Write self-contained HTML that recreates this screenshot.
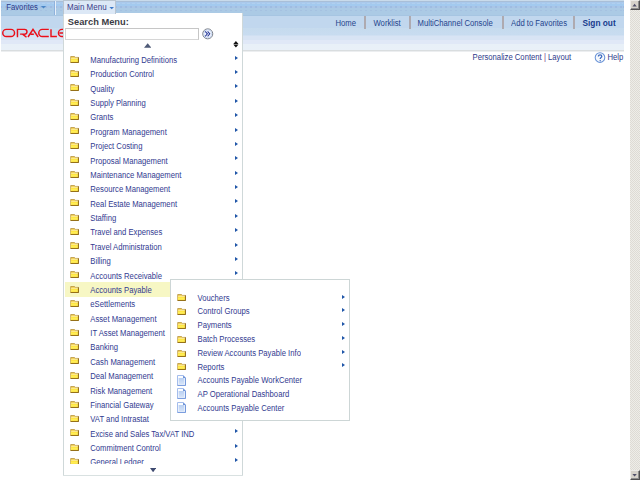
<!DOCTYPE html>
<html><head><meta charset="utf-8">
<style>
*{margin:0;padding:0;box-sizing:border-box}
html,body{width:640px;height:480px;overflow:hidden;background:#fff}
body{position:relative;font-family:"Liberation Sans",sans-serif;font-size:7.7px;color:#323a90}
.t{position:absolute;white-space:nowrap;line-height:10px}
.a{position:absolute}
#hdr{position:absolute;left:1px;top:0;width:623px;height:52px;background:linear-gradient(to bottom,
 #c9dbeb 0px,#c9dbeb 1px,#a9bfd8 1px,#a9bfd8 2px,#a9c9ec 2px,#a9c9ec 4px,#a3caef 4px,#a3caef 6px,#a9c6e6 6px,#a9c6e6 8px,#abcae5 8px,#abcae5 15px,
 #a6c5e2 15px,#a6c5e2 16px,#c1d7ee 16px,#c1d7ee 28px,#c6dbee 28px,#c8dcf0 35px,#d8e4f4 36px,#d8e4f4 40px,#e0e8f7 40px,#e0e8f7 44px,#e8f0f8 44px,#e9f0f8 50px,
 #d9dddf 50px,#d9dddf 51px,#eceef0 51px,#eceef0 52px)}
.sep{position:absolute;width:1px;background:#9ea6ae}
.sbb{position:absolute;left:630px;width:10px;height:10px;background:#d6d2ca;border-top:1px solid #ecebe6;border-left:1px solid #ecebe6;border-right:1px solid #505050;border-bottom:1px solid #505050;box-shadow:inset -1px -1px #8c8c8c}
.fd{position:absolute;width:9px;height:7px}
.dc{position:absolute;width:9px;height:11px}
.ar{position:absolute;width:0;height:0;border-top:2.5px solid transparent;border-bottom:2.5px solid transparent;border-left:3px solid #1f55a8}
</style></head><body>
<div id="hdr"></div>
<div class="a" style="left:1px;top:3px;width:623px;height:1px;background:repeating-linear-gradient(to right,transparent 0,transparent 2px,#b0d0ef 2px,#b0d0ef 5px);background-position:-1px 0"></div>
<div class="a" style="left:1px;top:6px;width:623px;height:2px;background:repeating-linear-gradient(to right,#9fbce2 0,#9fbce2 2px,transparent 2px,transparent 5px);background-position:-1px 0"></div>
<div class="a" style="left:1px;top:10px;width:623px;height:1px;background:repeating-linear-gradient(to right,#a5c1e1 0,#a5c1e1 2px,transparent 2px,transparent 5px);background-position:-1px 0"></div>
<div class="t" style="left:6.30px;top:2.50px;font-size:7.7px;transform:scaleY(1.15);transform-origin:0 7.50px;color:#2e3a8a;">Favorites</div>
<svg class="a" style="left:40px;top:5px" width="8" height="5" viewBox="40 5 8 5"><path d="M40.9 5.9 H46.1 L43.5 8.5 Z" fill="#4a86c6"/></svg>
<div class="sep" style="left:54px;top:1px;height:14px;background:#8fb2dc"></div>
<div class="sep" style="left:55px;top:1px;height:14px;background:#e8f0fa"></div>
<svg class="a" style="left:0;top:26px" width="64" height="14" viewBox="0 26 64 14">
 <g fill="none" stroke="#ea0f1a" stroke-width="1.45">
  <path d="M6.3 29.35 H11.0 A3.55 3.55 0 0 1 11.0 36.45 H6.3 A3.55 3.55 0 0 1 6.3 29.35 Z"/>
  <path d="M17.45 37.3 V29.35 H24.6 A2.375 2.375 0 0 1 24.6 34.1 H20.1 M22.6 34.1 L26.5 37.3"/>
  <path d="M28.0 37.0 L33.0 29.35 L38.1 37.0 M30.7 34.3 H33.8"/>
  <path d="M48.8 29.35 H42.3 A3.55 3.55 0 0 0 42.3 36.45 H48.8"/>
  <path d="M51.0 29.2 V36.45 H56.9"/>
  <path d="M63.5 29.35 H62.0 A3.55 3.55 0 0 0 62.0 36.45 H63.5 M59.5 33.0 H63.5"/>
 </g>
</svg>
<div class="t" style="left:335.50px;top:19.10px;font-size:7.7px;transform:scaleY(1.15);transform-origin:0 7.50px;color:#24448c;">Home</div>
<div class="sep" style="left:364px;top:16px;height:12.5px;width:2px;background:#aeaab0"></div>
<div class="t" style="left:373.50px;top:19.10px;font-size:7.7px;transform:scaleY(1.15);transform-origin:0 7.50px;color:#24448c;">Worklist</div>
<div class="sep" style="left:409px;top:16px;height:12.5px;width:2px;background:#aeaab0"></div>
<div class="t" style="left:417.50px;top:19.10px;font-size:7.7px;transform:scaleY(1.15);transform-origin:0 7.50px;color:#24448c;">MultiChannel Console</div>
<div class="sep" style="left:502px;top:16px;height:12.5px;width:2px;background:#aeaab0"></div>
<div class="t" style="left:511.00px;top:19.10px;font-size:7.7px;transform:scaleY(1.15);transform-origin:0 7.50px;color:#24448c;">Add to Favorites</div>
<div class="sep" style="left:573px;top:16px;height:12.5px;width:2px;background:#aeaab0"></div>
<div class="t" style="left:582.50px;top:18.30px;font-size:8.3px;transform:scaleY(1.05);transform-origin:0 8.00px;color:#173b8c;font-weight:bold;">Sign out</div>
<div class="t" style="left:472.50px;top:53.10px;font-size:7.7px;transform:scaleY(1.15);transform-origin:0 7.50px;color:#2e3a8a;">Personalize Content <span style="color:#6e3a84">|</span> Layout</div>
<svg class="a" style="left:594px;top:52px" width="12" height="12" viewBox="0 0 12 12">
 <circle cx="6" cy="5.6" r="4.8" fill="#f6f9fd" stroke="#6a94d8" stroke-width="1.05"/>
 <path d="M4.4 4.6 C4.4 3.5 5.1 2.9 6.1 2.9 C7.1 2.9 7.8 3.5 7.8 4.4 C7.8 5.5 6.2 5.7 6.2 7.0" fill="none" stroke="#3f6cc0" stroke-width="1.3"/><circle cx="6.2" cy="8.7" r="0.75" fill="#3f6cc0"/>
</svg>
<div class="t" style="left:607.50px;top:53.10px;font-size:7.7px;transform:scaleY(1.15);transform-origin:0 7.50px;color:#2e3a8a;">Help</div>
<div class="a" style="left:630px;top:0;width:10px;height:480px;background-color:#dedbd4;background-image:linear-gradient(45deg,#eeede8 25%,transparent 25%,transparent 75%,#eeede8 75%),linear-gradient(45deg,#eeede8 25%,transparent 25%,transparent 75%,#eeede8 75%);background-size:2px 2px;background-position:0 0,1px 1px"></div>
<div class="sbb" style="top:0"></div>
<svg class="a" style="left:631px;top:1px" width="8" height="8" viewBox="0 0 8 8"><path d="M1.4 5.4 L3.6 2.8 L5.8 5.4 Z" fill="#505068"/></svg>
<div class="sbb" style="top:470px"></div>
<svg class="a" style="left:631px;top:471px" width="8" height="8" viewBox="0 0 8 8"><path d="M1.4 3.0 L3.6 5.6 L5.8 3.0 Z" fill="#505068"/></svg>
<div class="a" style="left:63px;top:13px;width:180px;height:462px;background:#fff;border:1px solid #cfd8d9;border-width:0 1px 0 1px"></div>
<div class="a" style="left:63px;top:474.8px;width:180px;height:1.5px;background:#d9e1e1"></div>
<div class="a" style="left:63px;top:0;width:53px;height:14px;background:#dce8f6;border:1px solid #b8c4d0;border-bottom:none"></div>
<div class="t" style="left:67.00px;top:3.30px;font-size:8.0px;transform:scaleY(1.2);transform-origin:0 7.50px;color:#3a3c88;">Main Menu</div>
<svg class="a" style="left:108px;top:6px" width="8" height="5" viewBox="108 6 8 5"><path d="M109.4 7.0 H114.0 L111.7 9.3 Z" fill="#3a78c8"/></svg>
<div class="t" style="left:67.80px;top:16.90px;font-size:9.3px;transform:scaleY(1.05);transform-origin:0 8.00px;color:#3c3c44;font-weight:bold;">Search Menu:</div>
<div class="a" style="left:65px;top:28px;width:134px;height:11.5px;background:#fff;border:1px solid #c6c6c6;border-left-color:#d6d6d6;border-bottom:1.5px solid #d6d6d6"></div>
<svg class="a" style="left:201.5px;top:28px" width="12" height="12" viewBox="0 0 12 12">
 <circle cx="5.75" cy="5.85" r="5.0" fill="#f6f9fd" stroke="#6c727c" stroke-width="0.9"/>
 <circle cx="5.75" cy="5.85" r="4.0" fill="none" stroke="#bccff0" stroke-width="0.8"/>
 <path d="M3.2 3.3 L5.4 5.85 L3.2 8.4 M5.6 3.3 L7.8 5.85 L5.6 8.4" fill="none" stroke="#2b3c9c" stroke-width="1.05"/>
</svg>
<svg class="a" style="left:233px;top:40.5px" width="6" height="7" viewBox="0 0 6 7"><path d="M0.3 2.9 L2.9 0 L5.5 2.9 Z M0.3 3.6 L2.9 6.5 L5.5 3.6 Z" fill="#111"/></svg>
<svg class="a" style="left:143.8px;top:43.3px" width="7.5" height="5" viewBox="0 0 7.5 5"><path d="M0 4.8 L3.7 0.3 L7.4 4.8 Z" fill="#4f5b78"/></svg>
<svg class="a" style="left:150px;top:467.8px" width="6.2" height="4.4" viewBox="0 0 6.2 4.4"><path d="M0 0 L6.2 0 L3.1 4.3 Z" fill="#3e4a70"/></svg>
<svg width="0" height="0" style="position:absolute">
 <defs>
  <linearGradient id="fg" x1="0" y1="0" x2="0" y2="1"><stop offset="0" stop-color="#ffe030"/><stop offset="0.6" stop-color="#fff060"/><stop offset="1" stop-color="#f8d830"/></linearGradient>
  <linearGradient id="dg" x1="0" y1="0" x2="0" y2="1"><stop offset="0" stop-color="#b8cff2"/><stop offset="1" stop-color="#d6e4f8"/></linearGradient>
  <symbol id="fold" viewBox="0 0 9 7"><path d="M0.7 6.6 V0.5 H4.5 L5.1 1.4 H8.4 V6.6 Z" fill="#f0c838" stroke="#b08a38" stroke-width="0.7"/><rect x="1.1" y="1.8" width="7" height="0.9" fill="#fffce8"/><rect x="0.9" y="2.7" width="7.3" height="3.7" fill="url(#fg)"/><path d="M8.4 1.4 V6.6 H0.7" fill="none" stroke="#86600e" stroke-width="0.9"/></symbol>
  <symbol id="doc" viewBox="0 0 9 11"><path d="M0.5 0.5 H6.2 L8.5 2.8 V10.4 H0.5 Z" fill="#fbfdff" stroke="#9ab6ea" stroke-width="0.9"/><path d="M8.5 2.8 V10.4 H0.5" fill="none" stroke="#6f95da" stroke-width="0.9"/><path d="M6.1 0.4 V2.9 H8.6 Z" fill="#5f88d4"/><rect x="1.6" y="3.0" width="5.8" height="6.2" fill="url(#dg)"/></symbol>
 </defs>
</svg>
<div class="a" style="left:64px;top:50px;width:178px;height:414.2px;overflow:hidden">
<div class="t" style="left:26.30px;top:5.90px;font-size:7.7px;transform:scaleY(1.15);transform-origin:0 7.50px;">Manufacturing Definitions</div>
<svg class="fd" style="left:6.400000000000006px;top:5.60px" viewBox="0 0 9 7"><use href="#fold"/></svg>
<div class="ar" style="left:171px;top:5.70px"></div>
<div class="t" style="left:26.30px;top:20.28px;font-size:7.7px;transform:scaleY(1.15);transform-origin:0 7.50px;">Production Control</div>
<svg class="fd" style="left:6.400000000000006px;top:19.98px" viewBox="0 0 9 7"><use href="#fold"/></svg>
<div class="ar" style="left:171px;top:20.08px"></div>
<div class="t" style="left:26.30px;top:34.65px;font-size:7.7px;transform:scaleY(1.15);transform-origin:0 7.50px;">Quality</div>
<svg class="fd" style="left:6.400000000000006px;top:34.35px" viewBox="0 0 9 7"><use href="#fold"/></svg>
<div class="ar" style="left:171px;top:34.45px"></div>
<div class="t" style="left:26.30px;top:49.03px;font-size:7.7px;transform:scaleY(1.15);transform-origin:0 7.50px;">Supply Planning</div>
<svg class="fd" style="left:6.400000000000006px;top:48.73px" viewBox="0 0 9 7"><use href="#fold"/></svg>
<div class="ar" style="left:171px;top:48.83px"></div>
<div class="t" style="left:26.30px;top:63.40px;font-size:7.7px;transform:scaleY(1.15);transform-origin:0 7.50px;">Grants</div>
<svg class="fd" style="left:6.400000000000006px;top:63.10px" viewBox="0 0 9 7"><use href="#fold"/></svg>
<div class="ar" style="left:171px;top:63.20px"></div>
<div class="t" style="left:26.30px;top:77.77px;font-size:7.7px;transform:scaleY(1.15);transform-origin:0 7.50px;">Program Management</div>
<svg class="fd" style="left:6.400000000000006px;top:77.47px" viewBox="0 0 9 7"><use href="#fold"/></svg>
<div class="ar" style="left:171px;top:77.57px"></div>
<div class="t" style="left:26.30px;top:92.15px;font-size:7.7px;transform:scaleY(1.15);transform-origin:0 7.50px;">Project Costing</div>
<svg class="fd" style="left:6.400000000000006px;top:91.85px" viewBox="0 0 9 7"><use href="#fold"/></svg>
<div class="ar" style="left:171px;top:91.95px"></div>
<div class="t" style="left:26.30px;top:106.52px;font-size:7.7px;transform:scaleY(1.15);transform-origin:0 7.50px;">Proposal Management</div>
<svg class="fd" style="left:6.400000000000006px;top:106.22px" viewBox="0 0 9 7"><use href="#fold"/></svg>
<div class="ar" style="left:171px;top:106.32px"></div>
<div class="t" style="left:26.30px;top:120.90px;font-size:7.7px;transform:scaleY(1.15);transform-origin:0 7.50px;">Maintenance Management</div>
<svg class="fd" style="left:6.400000000000006px;top:120.60px" viewBox="0 0 9 7"><use href="#fold"/></svg>
<div class="ar" style="left:171px;top:120.70px"></div>
<div class="t" style="left:26.30px;top:135.27px;font-size:7.7px;transform:scaleY(1.15);transform-origin:0 7.50px;">Resource Management</div>
<svg class="fd" style="left:6.400000000000006px;top:134.97px" viewBox="0 0 9 7"><use href="#fold"/></svg>
<div class="ar" style="left:171px;top:135.07px"></div>
<div class="t" style="left:26.30px;top:149.65px;font-size:7.7px;transform:scaleY(1.15);transform-origin:0 7.50px;">Real Estate Management</div>
<svg class="fd" style="left:6.400000000000006px;top:149.35px" viewBox="0 0 9 7"><use href="#fold"/></svg>
<div class="ar" style="left:171px;top:149.45px"></div>
<div class="t" style="left:26.30px;top:164.02px;font-size:7.7px;transform:scaleY(1.15);transform-origin:0 7.50px;">Staffing</div>
<svg class="fd" style="left:6.400000000000006px;top:163.72px" viewBox="0 0 9 7"><use href="#fold"/></svg>
<div class="ar" style="left:171px;top:163.82px"></div>
<div class="t" style="left:26.30px;top:178.40px;font-size:7.7px;transform:scaleY(1.15);transform-origin:0 7.50px;">Travel and Expenses</div>
<svg class="fd" style="left:6.400000000000006px;top:178.10px" viewBox="0 0 9 7"><use href="#fold"/></svg>
<div class="ar" style="left:171px;top:178.20px"></div>
<div class="t" style="left:26.30px;top:192.77px;font-size:7.7px;transform:scaleY(1.15);transform-origin:0 7.50px;">Travel Administration</div>
<svg class="fd" style="left:6.400000000000006px;top:192.47px" viewBox="0 0 9 7"><use href="#fold"/></svg>
<div class="ar" style="left:171px;top:192.57px"></div>
<div class="t" style="left:26.30px;top:207.15px;font-size:7.7px;transform:scaleY(1.15);transform-origin:0 7.50px;">Billing</div>
<svg class="fd" style="left:6.400000000000006px;top:206.85px" viewBox="0 0 9 7"><use href="#fold"/></svg>
<div class="ar" style="left:171px;top:206.95px"></div>
<div class="t" style="left:26.30px;top:221.52px;font-size:7.7px;transform:scaleY(1.15);transform-origin:0 7.50px;">Accounts Receivable</div>
<svg class="fd" style="left:6.400000000000006px;top:221.22px" viewBox="0 0 9 7"><use href="#fold"/></svg>
<div class="ar" style="left:171px;top:221.32px"></div>
<div class="a" style="left:1px;top:232.25px;width:178px;height:14.4px;background:#f7f7c4"></div>
<div class="t" style="left:26.30px;top:235.90px;font-size:7.7px;transform:scaleY(1.15);transform-origin:0 7.50px;">Accounts Payable</div>
<svg class="fd" style="left:6.400000000000006px;top:235.60px" viewBox="0 0 9 7"><use href="#fold"/></svg>
<div class="ar" style="left:171px;top:235.70px"></div>
<div class="t" style="left:26.30px;top:250.27px;font-size:7.7px;transform:scaleY(1.15);transform-origin:0 7.50px;">eSettlements</div>
<svg class="fd" style="left:6.400000000000006px;top:249.97px" viewBox="0 0 9 7"><use href="#fold"/></svg>
<div class="ar" style="left:171px;top:250.07px"></div>
<div class="t" style="left:26.30px;top:264.65px;font-size:7.7px;transform:scaleY(1.15);transform-origin:0 7.50px;">Asset Management</div>
<svg class="fd" style="left:6.400000000000006px;top:264.35px" viewBox="0 0 9 7"><use href="#fold"/></svg>
<div class="ar" style="left:171px;top:264.45px"></div>
<div class="t" style="left:26.30px;top:279.02px;font-size:7.7px;transform:scaleY(1.15);transform-origin:0 7.50px;">IT Asset Management</div>
<svg class="fd" style="left:6.400000000000006px;top:278.72px" viewBox="0 0 9 7"><use href="#fold"/></svg>
<div class="ar" style="left:171px;top:278.82px"></div>
<div class="t" style="left:26.30px;top:293.40px;font-size:7.7px;transform:scaleY(1.15);transform-origin:0 7.50px;">Banking</div>
<svg class="fd" style="left:6.400000000000006px;top:293.10px" viewBox="0 0 9 7"><use href="#fold"/></svg>
<div class="ar" style="left:171px;top:293.20px"></div>
<div class="t" style="left:26.30px;top:307.77px;font-size:7.7px;transform:scaleY(1.15);transform-origin:0 7.50px;">Cash Management</div>
<svg class="fd" style="left:6.400000000000006px;top:307.47px" viewBox="0 0 9 7"><use href="#fold"/></svg>
<div class="ar" style="left:171px;top:307.57px"></div>
<div class="t" style="left:26.30px;top:322.15px;font-size:7.7px;transform:scaleY(1.15);transform-origin:0 7.50px;">Deal Management</div>
<svg class="fd" style="left:6.400000000000006px;top:321.85px" viewBox="0 0 9 7"><use href="#fold"/></svg>
<div class="ar" style="left:171px;top:321.95px"></div>
<div class="t" style="left:26.30px;top:336.52px;font-size:7.7px;transform:scaleY(1.15);transform-origin:0 7.50px;">Risk Management</div>
<svg class="fd" style="left:6.400000000000006px;top:336.22px" viewBox="0 0 9 7"><use href="#fold"/></svg>
<div class="ar" style="left:171px;top:336.32px"></div>
<div class="t" style="left:26.30px;top:350.90px;font-size:7.7px;transform:scaleY(1.15);transform-origin:0 7.50px;">Financial Gateway</div>
<svg class="fd" style="left:6.400000000000006px;top:350.60px" viewBox="0 0 9 7"><use href="#fold"/></svg>
<div class="ar" style="left:171px;top:350.70px"></div>
<div class="t" style="left:26.30px;top:365.27px;font-size:7.7px;transform:scaleY(1.15);transform-origin:0 7.50px;">VAT and Intrastat</div>
<svg class="fd" style="left:6.400000000000006px;top:364.97px" viewBox="0 0 9 7"><use href="#fold"/></svg>
<div class="ar" style="left:171px;top:365.07px"></div>
<div class="t" style="left:26.30px;top:379.65px;font-size:7.7px;transform:scaleY(1.15);transform-origin:0 7.50px;">Excise and Sales Tax/VAT IND</div>
<svg class="fd" style="left:6.400000000000006px;top:379.35px" viewBox="0 0 9 7"><use href="#fold"/></svg>
<div class="ar" style="left:171px;top:379.45px"></div>
<div class="t" style="left:26.30px;top:394.02px;font-size:7.7px;transform:scaleY(1.15);transform-origin:0 7.50px;">Commitment Control</div>
<svg class="fd" style="left:6.400000000000006px;top:393.72px" viewBox="0 0 9 7"><use href="#fold"/></svg>
<div class="ar" style="left:171px;top:393.82px"></div>
<div class="t" style="left:26.30px;top:408.40px;font-size:7.7px;transform:scaleY(1.15);transform-origin:0 7.50px;">General Ledger</div>
<svg class="fd" style="left:6.400000000000006px;top:408.10px" viewBox="0 0 9 7"><use href="#fold"/></svg>
<div class="ar" style="left:171px;top:408.20px"></div>
</div>
<div class="a" style="left:170px;top:279px;width:180px;height:142px;background:#fff;border:1px solid #cdd6d6"></div>
<div class="t" style="left:197.50px;top:293.70px;font-size:7.7px;transform:scaleY(1.15);transform-origin:0 7.50px;">Vouchers</div>
<svg class="fd" style="left:177px;top:294.40px" viewBox="0 0 9 7"><use href="#fold"/></svg>
<div class="ar" style="left:341.5px;top:294.50px"></div>
<div class="t" style="left:197.50px;top:307.48px;font-size:7.7px;transform:scaleY(1.15);transform-origin:0 7.50px;">Control Groups</div>
<svg class="fd" style="left:177px;top:308.18px" viewBox="0 0 9 7"><use href="#fold"/></svg>
<div class="ar" style="left:341.5px;top:308.28px"></div>
<div class="t" style="left:197.50px;top:321.26px;font-size:7.7px;transform:scaleY(1.15);transform-origin:0 7.50px;">Payments</div>
<svg class="fd" style="left:177px;top:321.96px" viewBox="0 0 9 7"><use href="#fold"/></svg>
<div class="ar" style="left:341.5px;top:322.06px"></div>
<div class="t" style="left:197.50px;top:335.04px;font-size:7.7px;transform:scaleY(1.15);transform-origin:0 7.50px;">Batch Processes</div>
<svg class="fd" style="left:177px;top:335.74px" viewBox="0 0 9 7"><use href="#fold"/></svg>
<div class="ar" style="left:341.5px;top:335.84px"></div>
<div class="t" style="left:197.50px;top:348.82px;font-size:7.7px;transform:scaleY(1.15);transform-origin:0 7.50px;">Review Accounts Payable Info</div>
<svg class="fd" style="left:177px;top:349.52px" viewBox="0 0 9 7"><use href="#fold"/></svg>
<div class="ar" style="left:341.5px;top:349.62px"></div>
<div class="t" style="left:197.50px;top:362.60px;font-size:7.7px;transform:scaleY(1.15);transform-origin:0 7.50px;">Reports</div>
<svg class="fd" style="left:177px;top:363.30px" viewBox="0 0 9 7"><use href="#fold"/></svg>
<div class="ar" style="left:341.5px;top:363.40px"></div>
<div class="t" style="left:197.50px;top:376.38px;font-size:7.7px;transform:scaleY(1.15);transform-origin:0 7.50px;">Accounts Payable WorkCenter</div>
<svg class="dc" style="left:177px;top:374.68px" viewBox="0 0 9 11"><use href="#doc"/></svg>
<div class="t" style="left:197.50px;top:390.16px;font-size:7.7px;transform:scaleY(1.15);transform-origin:0 7.50px;">AP Operational Dashboard</div>
<svg class="dc" style="left:177px;top:388.46px" viewBox="0 0 9 11"><use href="#doc"/></svg>
<div class="t" style="left:197.50px;top:403.94px;font-size:7.7px;transform:scaleY(1.15);transform-origin:0 7.50px;">Accounts Payable Center</div>
<svg class="dc" style="left:177px;top:402.24px" viewBox="0 0 9 11"><use href="#doc"/></svg>
</body></html>
